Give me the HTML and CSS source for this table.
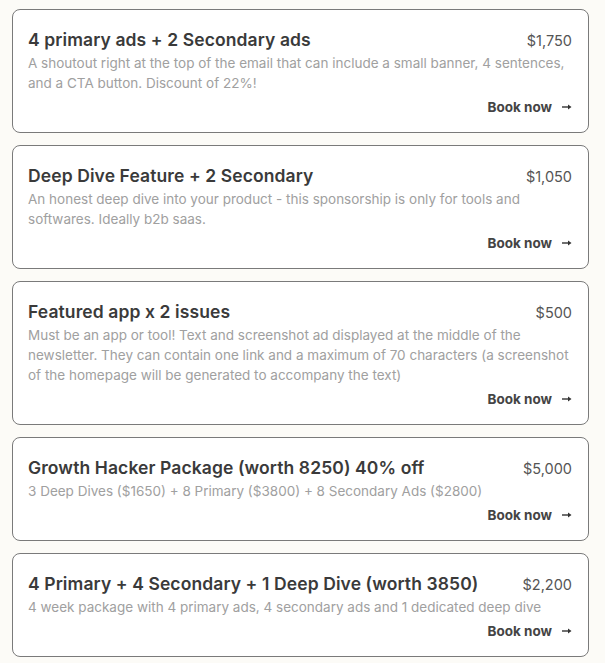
FILE: index.html
```html
<!DOCTYPE html>
<html lang="en">
<head>
<meta charset="utf-8">
<title>Sponsorship packages</title>
<link rel="stylesheet" href="styles.css">
</head>
<body>
<main class="list">
  <section class="card">
    <div class="head"><h2 class="title">4 primary ads + 2 Secondary ads</h2><span class="price">$1,750</span></div>
    <p class="desc">A shoutout right at the top of the email that can include a small banner, 4 sentences, and a CTA button. Discount of 22%!</p>
    <div class="foot"><a class="book" href="#">Book now <svg class="arrow" width="10" height="8" viewBox="0 0 10 8"><path d="M0 4h8" stroke="#333" stroke-width="1.4"/><path d="M6 1.5L9.5 4L6 6.5z" fill="#333"/></svg></a></div>
  </section>
  <section class="card">
    <div class="head"><h2 class="title">Deep Dive Feature + 2 Secondary</h2><span class="price">$1,050</span></div>
    <p class="desc">An honest deep dive into your product - this sponsorship is only for tools and softwares. Ideally b2b saas.</p>
    <div class="foot"><a class="book" href="#">Book now <svg class="arrow" width="10" height="8" viewBox="0 0 10 8"><path d="M0 4h8" stroke="#333" stroke-width="1.4"/><path d="M6 1.5L9.5 4L6 6.5z" fill="#333"/></svg></a></div>
  </section>
  <section class="card">
    <div class="head"><h2 class="title">Featured app x 2 issues</h2><span class="price">$500</span></div>
    <p class="desc">Must be an app or tool! Text and screenshot ad displayed at the middle of the newsletter. They can contain one link and a maximum of 70 characters (a screenshot of the homepage will be generated to accompany the text)</p>
    <div class="foot"><a class="book" href="#">Book now <svg class="arrow" width="10" height="8" viewBox="0 0 10 8"><path d="M0 4h8" stroke="#333" stroke-width="1.4"/><path d="M6 1.5L9.5 4L6 6.5z" fill="#333"/></svg></a></div>
  </section>
  <section class="card">
    <div class="head"><h2 class="title">Growth Hacker Package (worth 8250) 40% off</h2><span class="price">$5,000</span></div>
    <p class="desc">3 Deep Dives ($1650) + 8 Primary ($3800) + 8 Secondary Ads ($2800)</p>
    <div class="foot"><a class="book" href="#">Book now <svg class="arrow" width="10" height="8" viewBox="0 0 10 8"><path d="M0 4h8" stroke="#333" stroke-width="1.4"/><path d="M6 1.5L9.5 4L6 6.5z" fill="#333"/></svg></a></div>
  </section>
  <section class="card">
    <div class="head"><h2 class="title">4 Primary + 4 Secondary + 1 Deep Dive (worth 3850)</h2><span class="price">$2,200</span></div>
    <p class="desc">4 week package with 4 primary ads, 4 secondary ads and 1 dedicated deep dive</p>
    <div class="foot"><a class="book" href="#">Book now <svg class="arrow" width="10" height="8" viewBox="0 0 10 8"><path d="M0 4h8" stroke="#333" stroke-width="1.4"/><path d="M6 1.5L9.5 4L6 6.5z" fill="#333"/></svg></a></div>
  </section>
</main>
</body>
</html>
```

FILE: styles.css
```css
html, body {
  margin: 0;
  padding: 0;
  background: #fcfbf7;
}
body {
  font-family: "Inter", "Liberation Sans", sans-serif;
  color: #333;
}
.list {
  width: 577px;
  margin: 9px 0 0 12px;
  display: flex;
  flex-direction: column;
  gap: 12px;
}
.card {
  background: #fff;
  border: 1px solid #7a7a7a;
  border-radius: 8px;
  padding: 19px 16px 15px 15px;
}
.head {
  display: flex;
  justify-content: space-between;
  align-items: baseline;
  gap: 12px;
}
.title {
  margin: 0;
  font-size: 17.5px;
  font-weight: 600;
  color: #3a3a3a;
  line-height: 22px;
  letter-spacing: 0.1px;
}
.price {
  font-size: 14.5px;
  color: #555;
  white-space: nowrap;
}
.desc {
  margin: 2px 0 0;
  font-size: 13.5px;
  line-height: 20px;
  color: #a0a0a0;
}
.foot {
  display: flex;
  justify-content: flex-end;
  margin-top: 4px;
}
.book {
  display: flex;
  align-items: center;
  gap: 10px;
  font-size: 13.5px;
  font-weight: 700;
  color: #444;
  text-decoration: none;
  line-height: 20px;
}
.arrow {
  display: block;
}
```
